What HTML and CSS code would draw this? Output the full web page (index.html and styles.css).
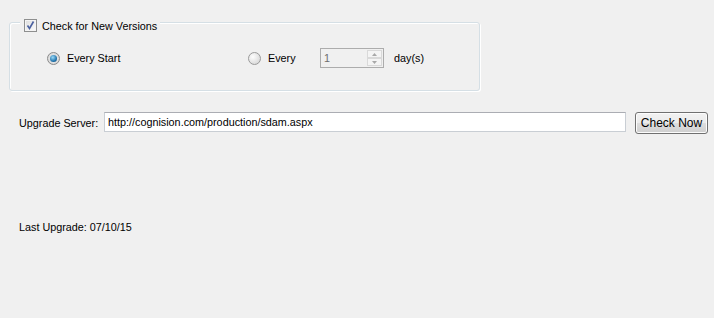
FILE: index.html
```html
<!DOCTYPE html>
<html lang="en">
<head>
    <meta charset="UTF-8">
    <title>Upgrade Settings</title>
    <link rel="stylesheet" href="styles.css">
</head>
<body>
    <div class="group">
        <label class="legend">
            <span class="check">
                <svg width="11" height="11" viewBox="0 0 11 11"><path d="M2.5 5.5 L4.5 8.5 L8.5 1.5" fill="none" stroke="#4b61a0" stroke-width="1.6"/></svg>
            </span>
            <span>Check for New Versions</span>
        </label>
        <div class="options">
            <label class="option first">
                <span class="radio on"><span class="dot"></span></span>
                <span>Every Start</span>
            </label>
            <label class="option second">
                <span class="radio"></span>
                <span>Every</span>
            </label>
            <div class="spinner">
                <span class="spin-value">1</span>
                <span class="spin-btns">
                    <span class="spin-btn"><svg width="5" height="3" viewBox="0 0 5 3"><path d="M0 3 L2.5 0 L5 3 Z" fill="#a8a8a8"/></svg></span>
                    <span class="spin-btn"><svg width="5" height="3" viewBox="0 0 5 3"><path d="M0 0 L2.5 3 L5 0 Z" fill="#a8a8a8"/></svg></span>
                </span>
            </div>
            <span class="unit">day(s)</span>
        </div>
    </div>

    <div class="server-row">
        <span class="server-label">Upgrade Server:</span>
        <div class="textbox">http://cognision.com/production/sdam.aspx</div>
        <button class="btn">Check Now</button>
    </div>

    <div class="last-upgrade">Last Upgrade: 07/10/15</div>
</body>
</html>
```

FILE: styles.css
```css
body {
    margin: 0;
    background-color: #f0f0f0;
    font-family: "Liberation Sans", Arial, sans-serif;
    font-size: 10.8px;
    color: #000;
    width: 714px;
    height: 318px;
}

.group {
    margin: 22px 0 0 9px;
    width: 471px;
    height: 69px;
    box-sizing: border-box;
    border: 1px solid #d5dfe5;
    border-radius: 3px;
    box-shadow: inset 1px 1px 0 #fff, 1px 1px 0 #fff;
}

.legend {
    display: flex;
    align-items: center;
    gap: 5px;
    width: max-content;
    height: 13px;
    margin: -4px 0 0 10px;
    padding: 0 3px 0 4px;
    background: #f0f0f0;
}

.check {
    width: 13px;
    height: 13px;
    box-sizing: border-box;
    border: 1px solid #8e8f8f;
    background: linear-gradient(135deg, #dcdcdc, #fdfdfd);
    box-shadow: inset 0 0 0 1px #f4f4f4;
    display: flex;
    align-items: center;
    justify-content: center;
}

.options {
    display: flex;
    align-items: center;
    height: 20px;
    margin-top: 16px;
    padding-left: 37px;
}

.option {
    display: flex;
    align-items: center;
    gap: 7px;
}

.option.first {
    width: 201px;
}

.option.second {
    width: 72px;
}

.radio {
    width: 13px;
    height: 13px;
    box-sizing: border-box;
    border-radius: 50%;
    border: 1px solid #9a9a9a;
    background: radial-gradient(circle at 35% 35%, #fdfdfd, #d0d0d0);
    display: flex;
    align-items: center;
    justify-content: center;
}

.radio.on {
    border-color: #8a8a8a;
    background: radial-gradient(circle at 50% 50%, #f4f4f4, #cfcfcf);
}

.dot {
    width: 7px;
    height: 7px;
    border-radius: 50%;
    background: radial-gradient(circle at 40% 35%, #9adaf8, #1d6fa8 65%, #123f63);
}

.spinner {
    width: 64px;
    height: 20px;
    box-sizing: border-box;
    border: 1px solid #acacac;
    background: #f0f0f0;
    display: flex;
    justify-content: space-between;
    padding: 1px;
}

.spin-value {
    color: #6d6d6d;
    padding-left: 2px;
    line-height: 16px;
}

.spin-btns {
    width: 15px;
    display: flex;
    flex-direction: column;
}

.spin-btn {
    flex: 1;
    box-sizing: border-box;
    border: 1px solid #d9d9d9;
    background: #f4f4f4;
    display: flex;
    align-items: center;
    justify-content: center;
}

.unit {
    margin-left: 10px;
}

.server-row {
    display: flex;
    align-items: center;
    margin-top: 21px;
    padding-left: 19px;
    height: 22px;
}

.server-label {
    width: 85px;
}

.textbox {
    width: 522px;
    height: 20px;
    box-sizing: border-box;
    border: 1px solid #c9ced4;
    border-top-color: #abadb3;
    background: #fff;
    padding: 0 3px;
    line-height: 18px;
    margin-top: -2px;
}

.btn {
    margin-left: 9px;
    width: 73px;
    height: 22px;
    box-sizing: border-box;
    border: 1px solid #707070;
    border-radius: 3px;
    background: linear-gradient(#f2f2f2 0%, #ebebeb 50%, #dddddd 51%, #cfcfcf 100%);
    box-shadow: inset 0 0 0 1px #fcfcfc;
    font-family: inherit;
    font-size: 12px;
    color: #000;
    padding: 0;
}

.last-upgrade {
    margin-top: 87px;
    padding-left: 19px;
}
```
